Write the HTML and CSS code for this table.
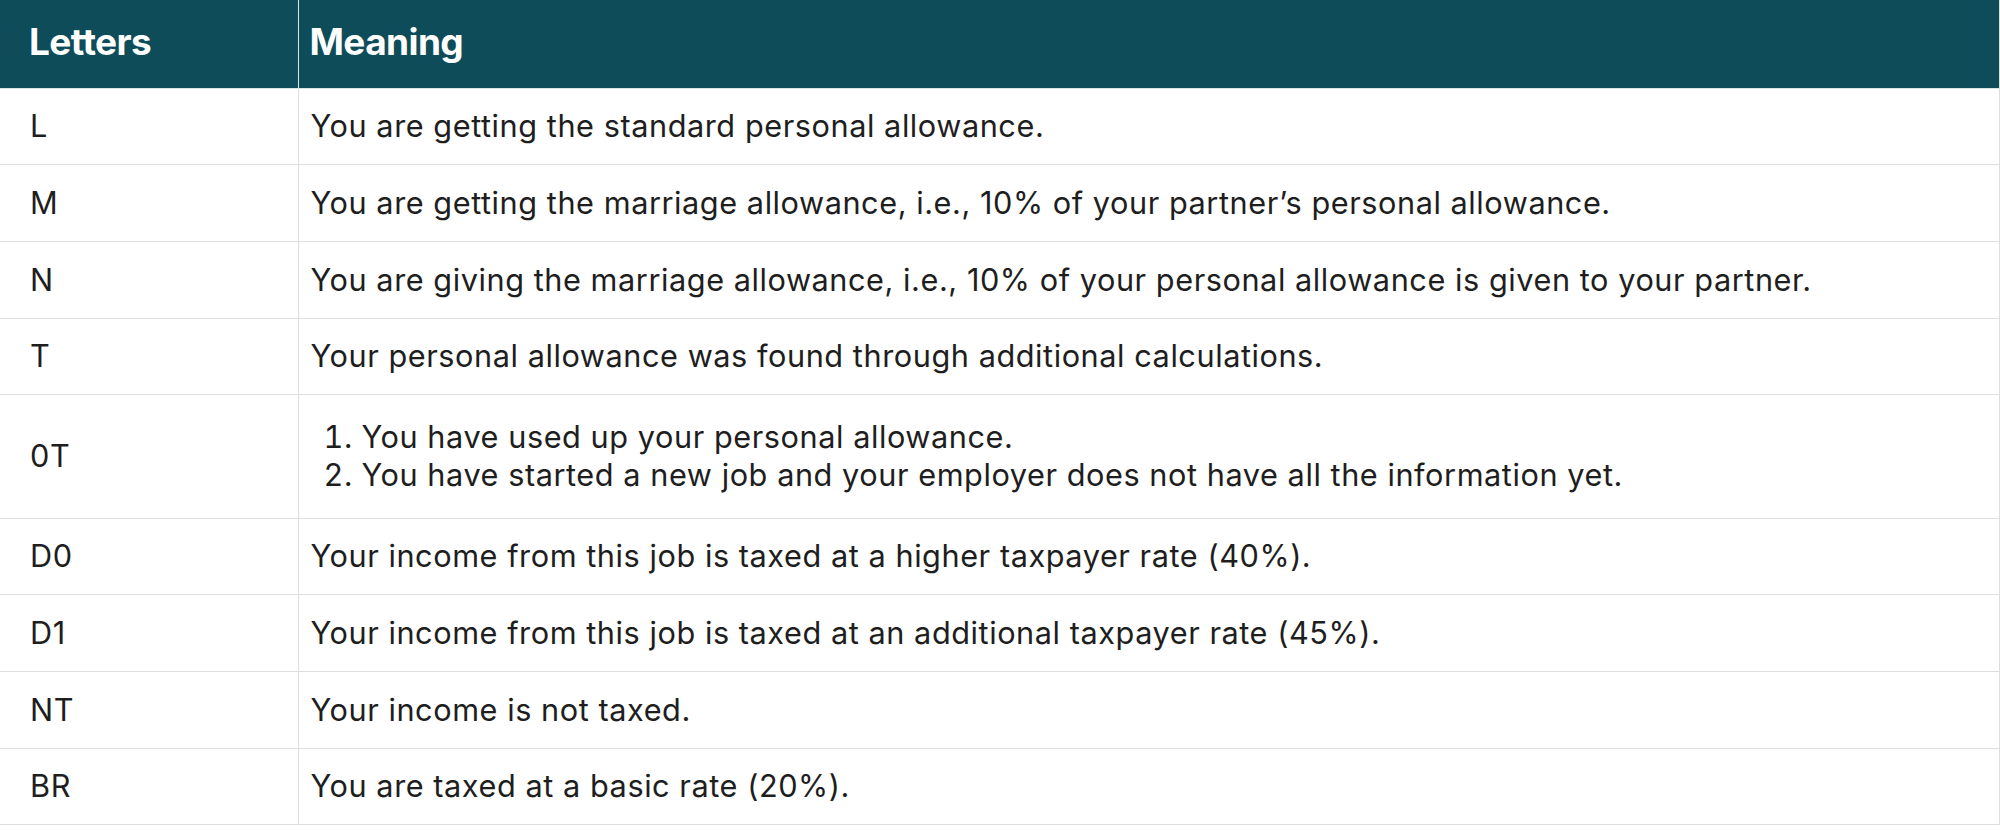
FILE: index.html
```html
<!DOCTYPE html>
<html lang="en">
<head>
<meta charset="utf-8">
<title>Tax code letters</title>
<link rel="stylesheet" href="styles.css">
</head>
<body>
<table class="codes">
  <colgroup>
    <col class="col-letter">
    <col class="col-meaning">
  </colgroup>
  <thead>
    <tr class="head-row">
      <th class="cell-letter">Letters</th>
      <th class="cell-meaning">Meaning</th>
    </tr>
  </thead>
  <tbody>
    <tr class="row"><td class="cell-letter">L</td><td class="cell-meaning">You are getting the standard personal allowance.</td></tr>
    <tr class="row"><td class="cell-letter">M</td><td class="cell-meaning">You are getting the marriage allowance, i.e., 10% of your partner’s personal allowance.</td></tr>
    <tr class="row"><td class="cell-letter">N</td><td class="cell-meaning">You are giving the marriage allowance, i.e., 10% of your personal allowance is given to your partner.</td></tr>
    <tr class="row"><td class="cell-letter">T</td><td class="cell-meaning">Your personal allowance was found through additional calculations.</td></tr>
    <tr class="row row-tall"><td class="cell-letter">0T</td><td class="cell-meaning">
      <ol class="reasons">
        <li>You have used up your personal allowance.</li>
        <li>You have started a new job and your employer does not have all the information yet.</li>
      </ol>
    </td></tr>
    <tr class="row"><td class="cell-letter">D0</td><td class="cell-meaning">Your income from this job is taxed at a higher taxpayer rate (40%).</td></tr>
    <tr class="row"><td class="cell-letter">D1</td><td class="cell-meaning">Your income from this job is taxed at an additional taxpayer rate (45%).</td></tr>
    <tr class="row"><td class="cell-letter">NT</td><td class="cell-meaning">Your income is not taxed.</td></tr>
    <tr class="row"><td class="cell-letter">BR</td><td class="cell-meaning">You are taxed at a basic rate (20%).</td></tr>
  </tbody>
</table>
</body>
</html>
```

FILE: styles.css
```css
html, body {
  margin: 0;
  padding: 0;
  background: #ffffff;
}

body {
  font-family: Inter, "Liberation Sans", sans-serif;
  color: #1e1e1e;
}

.codes {
  width: 2000px;
  border-collapse: collapse;
  table-layout: fixed;
}

.col-letter {
  width: 298px;
}

.head-row {
  height: 88px;
  background: #0f4c59;
}

.head-row th {
  color: #ffffff;
  font-weight: 700;
  font-size: 37px;
  letter-spacing: -0.6px;
  text-align: left;
  vertical-align: middle;
  padding: 0 0 4px 0;
  border-right: 1px solid #d9e4e7;
}

.head-row th.cell-letter {
  padding-left: 29px;
}

.head-row th.cell-meaning {
  padding-left: 11px;
  border-right: 1px solid #dddddd;
}

.row {
  height: 76.7px;
}

.row td {
  font-size: 30.7px;
  letter-spacing: 0.55px;
  line-height: 38px;
  font-weight: 400;
  vertical-align: middle;
  padding: 0;
  border-bottom: 1px solid #dedede;
  border-right: 1px solid #dedede;
}

.row-tall {
  height: 123.3px;
}

.row td.cell-letter {
  padding-left: 30px;
}

.row td.cell-meaning {
  padding-left: 12px;
}

thead .head-row {
  border-bottom: 1px solid #dbe3e5;
}

.reasons {
  margin: 0;
  padding-left: 51px;
}
```
